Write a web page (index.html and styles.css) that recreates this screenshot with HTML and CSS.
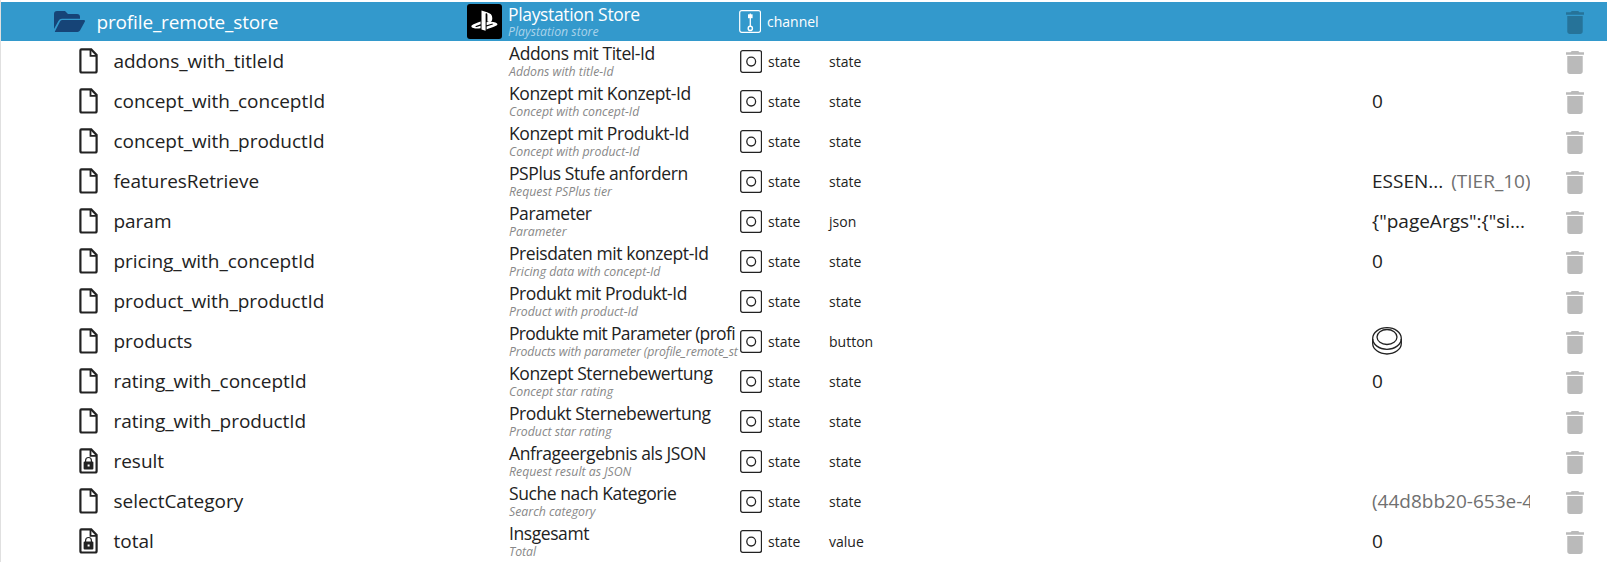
FILE: index.html
```html
<!DOCTYPE html>
<html lang="de">
<head>
<meta charset="utf-8">
<title>Objects</title>
<link rel="stylesheet" href="styles.css">
</head>
<body>
<svg class="defs" aria-hidden="true">
  <symbol id="i-file" viewBox="0 0 19 26"><path d="M2.400 1.400H12.200L17.600 7V23a1.500 1.500 0 0 1-1.500 1.500H2.900A1.500 1.500 0 0 1 1.400 23V2.400a1 1 0 0 1 1-1Z" fill="none" stroke="currentColor" stroke-width="2.200"/><path d="M11.500 1.500V7.800H17.600" fill="none" stroke="currentColor" stroke-width="1.800"/></symbol>
  <symbol id="i-lock" viewBox="0 0 19 26"><use href="#i-file"/><path d="M6.600 14V12.400a2.900 2.900 0 0 1 5.800 0V14" fill="none" stroke="currentColor" stroke-width="1.200"/><path fill-rule="evenodd" fill="currentColor" d="M5.600 13.600h7.800a1 1 0 0 1 1 1v6a1 1 0 0 1-1 1H5.600a1 1 0 0 1-1-1v-6a1 1 0 0 1 1-1Zm3 2.800v2.200h2v-2.200Z"/></symbol>
  <symbol id="i-state" viewBox="0 0 22 23"><rect x=".7" y=".7" width="20.800" height="21.600" rx="2" fill="none" stroke="currentColor" stroke-width="1.300"/><circle cx="11.200" cy="11.600" r="4.400" fill="none" stroke="currentColor" stroke-width="1.300"/></symbol>
  <symbol id="i-channel" viewBox="0 0 22 23"><rect x=".7" y=".7" width="20.800" height="21.600" rx="2" fill="none" stroke="currentColor" stroke-width="1.200"/><path d="M11.300 3.500V16" stroke="currentColor" stroke-width="1.300"/><path d="M9 4.300h4.600v3.900H9Z" fill="currentColor"/><circle cx="11.300" cy="18.400" r="2.100" fill="none" stroke="currentColor" stroke-width="1.400"/></symbol>
  <symbol id="i-trash" viewBox="5 3 14 18" preserveAspectRatio="none"><path fill="currentColor" d="M6 19c0 1.100.9 2 2 2h8c1.100 0 2-.9 2-2V7H6zM19 4h-3.500l-1-1h-5l-1 1H5v2h14z"/></symbol>
  <symbol id="i-button" viewBox="0 0 30 28"><g fill="none" stroke="currentColor" stroke-width="1.300"><ellipse cx="15" cy="11.500" rx="14.300" ry="10.800"/><ellipse cx="15" cy="10" rx="10" ry="7.500"/><path d="M.7 12V16.500C.7 22 7 27 15 27s14.300-5 14.300-10.500V12"/></g></symbol>
</svg>
<main class="tree" id="tree">
  <div class="row row-head">
    <div class="id"><svg class="folder" viewBox="0 0 31 21"><path fill="currentColor" d="M0 18V3a3 3 0 0 1 3-3h8l3 3h9a3 3 0 0 1 3 3v1.800H8a4 4 0 0 0-3.600 2.200ZM1 20.300 6 10.500A2.500 2.500 0 0 1 8 9H30a1 1 0 0 1 .9 1.500L26 19.500A3 3 0 0 1 23.500 21H1.500A.5.500 0 0 1 1 20.300Z"/></svg><span>profile_remote_store</span></div>
    <div class="pic"><svg viewBox="0 0 35 35"><rect width="35" height="35" rx="3"/><path fill="#fff" d="M14.500 6.500l5.500 1.700c3.500 1.100 5.300 2.500 5.300 6 0 3.400-2.100 4.700-4.900 3.400v-6.600c0-.8-.2-1.500-.9-1.700s-.9.300-.9 1.100V26.800l-4.100-1.300Z"/><path fill="#fff" d="M13.600 17.600v2.700l-4.700 1.700c-1 .4-.6 1.100.8.900l3.900-1.200v2.500c-3 .6-5.400.4-7.300-.2-2.300-.7-2.600-2-1-3 1.300-.8 4.300-2 8.300-3.400ZM19.600 18.300c3.500-.8 6.500-.6 8.800.3 2.300.8 2.700 2.100 1.200 3-1.500.8-6 2.500-10 3.900v-2.900l6-2.100c1.100-.5.700-1-.8-.8l-5.200 1.500Z"/></svg></div>
    <div class="name"><span class="title">Playstation Store</span><span class="sub">Playstation store</span></div>
    <div class="type"><svg><use href="#i-channel"/></svg><span>channel</span></div>
    <div class="role"></div>
    <div class="value"></div>
    <div class="trash"><svg><use href="#i-trash"/></svg></div>
  </div>
</main>
<script src="rows.js"></script>
</body>
</html>
```
FILE: styles.css
```css
body {
  margin: 0;
  background: #fff;
  font-family: "Open Sans", "Noto Sans", sans-serif;
  color: #222;
  overflow: hidden;
}
.defs { display: none; }
.tree {
  box-sizing: border-box;
  height: 562px;
  padding-top: 2px;
  border-left: 1px solid #e0e0e0;
  overflow: hidden;
}
.row {
  display: grid;
  grid-template-columns: 466px 41px 231px 90px 543px 158px 1fr;
  align-items: center;
  height: 40px;
  white-space: nowrap;
}
.row-head {
  height: 39px;
  background: #3399cc;
  color: #fff;
}
.id {
  display: flex;
  align-items: center;
  gap: 16px;
  padding-left: 78px;
  font-size: 19px;
  letter-spacing: -0.03px;
  line-height: 26px;
}
.id svg { width: 19px; height: 26px; flex: none; }
.id span { margin-left: -0.5px; }
.row-head .id { padding-left: 53px; gap: 12px; letter-spacing: -0.15px; }
.row-head .folder { width: 31px; height: 21px; color: #164477; }
.pic svg { display: block; width: 35px; height: 35px; }
.name {
  display: flex;
  flex-direction: column;
  overflow: hidden;
  padding-left: 1px;
  height: 40px;
}
.row-head .name { padding-left: 0; height: 39px; }
.title { font-size: 17.5px; line-height: 25px; letter-spacing: -0.42px; }
.sub { font-size: 12.3px; line-height: 12px; font-style: italic; color: #888; }
.long .title { letter-spacing: -0.68px; }
.long .sub { letter-spacing: -0.14px; }
.row-head .title { line-height: 24px; letter-spacing: -0.34px; }
.row-head .sub { color: #a9d3ea; }
.type {
  display: flex;
  align-items: center;
  gap: 6px;
  font-size: 14px;
  padding-left: 1px;
}
.row-head .type { padding-left: 0; }
.type svg { width: 22px; height: 23px; flex: none; }
.role { font-size: 14px; }
.value {
  display: flex;
  overflow: hidden;
  font-size: 19px;
  gap: 8px;
}
.value .dim { color: #707070; }
.value svg { width: 30px; height: 28px; }
.trash svg { display: block; width: 18px; height: 23px; margin: 2px 0 0 36px; color: #bababa; }
.row-head .trash svg { color: #267399; }
```
FILE: rows.js
```
const rows = [
  ["addons_with_titleId", "Addons mit Titel-Id", "Addons with title-Id", "state", ""],
  ["concept_with_conceptId", "Konzept mit Konzept-Id", "Concept with concept-Id", "state", "0"],
  ["concept_with_productId", "Konzept mit Produkt-Id", "Concept with product-Id", "state", ""],
  ["featuresRetrieve", "PSPlus Stufe anfordern", "Request PSPlus tier", "state", "ESSEN...", "(TIER_10)"],
  ["param", "Parameter", "Parameter", "json", '{"pageArgs":{"si...'],
  ["pricing_with_conceptId", "Preisdaten mit konzept-Id", "Pricing data with concept-Id", "state", "0"],
  ["product_with_productId", "Produkt mit Produkt-Id", "Product with product-Id", "state", ""],
  ["products", "Produkte mit Parameter (profi", "Products with parameter (profile_remote_st", "button", "@button"],
  ["rating_with_conceptId", "Konzept Sternebewertung", "Concept star rating", "state", "0"],
  ["rating_with_productId", "Produkt Sternebewertung", "Product star rating", "state", ""],
  ["result", "Anfrageergebnis als JSON", "Request result as JSON", "state", ""],
  ["selectCategory", "Suche nach Kategorie", "Search category", "state", "", "(44d8bb20-653e-4"],
  ["total", "Insgesamt", "Total", "value", "0"]
];
const icon = (n) => `<svg><use href="#i-${n}"/></svg>`;
const readOnly = ["result", "total"];
document.getElementById("tree").insertAdjacentHTML("beforeend", rows.map(([id, title, sub, role, value, dim]) => `
  <div class="row">
    <div class="id">${icon(readOnly.includes(id) ? "lock" : "file")}<span>${id}</span></div>
    <div class="pic"></div>
    <div class="name${title.length > 26 ? " long" : ""}"><span class="title">${title}</span><span class="sub">${sub}</span></div>
    <div class="type">${icon("state")}<span>state</span></div>
    <div class="role">${role}</div>
    <div class="value">${value === "@button" ? icon("button") : value ? `<span>${value}</span>` : ""}${dim ? `<span class="dim">${dim}</span>` : ""}</div>
    <div class="trash">${icon("trash")}</div>
  </div>`).join(""));
```
